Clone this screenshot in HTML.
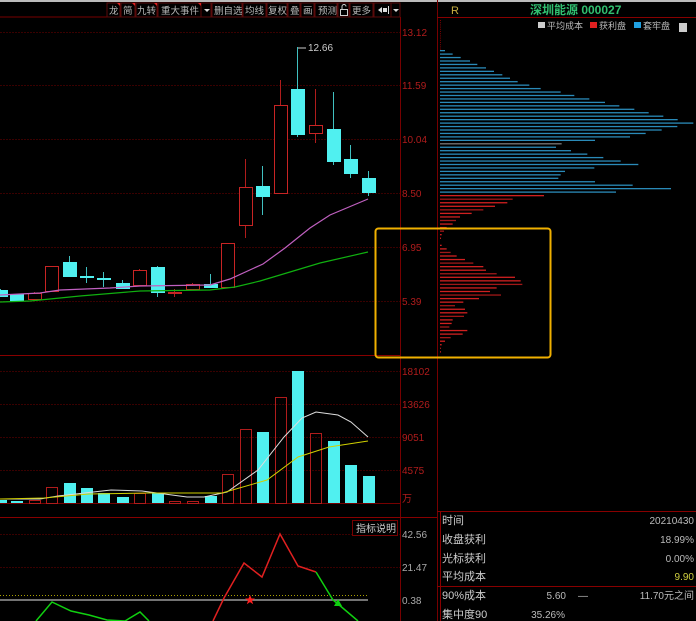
<!DOCTYPE html>
<html><head><meta charset="utf-8">
<style>
html,body{margin:0;padding:0;background:#000;width:696px;height:621px;overflow:hidden}
svg{display:block}
text{font-family:"Liberation Sans","Noto Sans CJK SC",sans-serif}
</style></head><body>
<svg id="s" width="696" height="621" xmlns="http://www.w3.org/2000/svg">
<rect width="696" height="621" fill="#000"/>
<line x1="0" y1="1" x2="696" y2="1" stroke="#bbb" stroke-width="2"/>
<line x1="0" y1="17" x2="400" y2="17" stroke="#700" />
<g fill="none" stroke="#5a0a0a">
<rect x="107" y="3" width="13" height="14"/><rect x="121" y="3" width="14" height="14"/><rect x="136" y="3" width="21" height="14"/><rect x="158" y="3" width="43" height="14"/><rect x="201" y="3" width="10" height="14"/><rect x="212" y="3" width="30" height="14"/><rect x="243" y="3" width="23" height="14"/><rect x="267" y="3" width="20" height="14"/><rect x="288" y="3" width="12" height="14"/><rect x="301" y="3" width="13" height="14"/><rect x="315" y="3" width="22" height="14"/><rect x="338" y="3" width="11" height="14"/><rect x="350" y="3" width="23" height="14"/><rect x="374" y="3" width="17" height="14"/><rect x="391" y="3" width="9" height="14"/>
</g>
<g fill="#b8b8b8" font-size="9.5">
<text x="109" y="14">龙</text><text x="123" y="14">简</text><text x="137" y="14">九转</text><text x="161" y="14">重大事件</text><text x="214" y="14">删自选</text><text x="245" y="14">均线</text><text x="268" y="14">复权</text><text x="290" y="14">叠</text><text x="303" y="14">画</text><text x="318" y="14">预测</text><text x="352" y="14">更多</text>
</g>
<g fill="#ddd"><path d="M204 9h6l-3 3z"/><path d="M393 9h6l-3 3z"/><path d="M378 10l4-3v6zM383 8h4v4h-4zM388 6h1v8h-1z"/></g>
<rect x="340.5" y="9.5" width="7" height="6" fill="none" stroke="#ccc"/><path d="M342 9V6.5a2 2 0 0 1 4 0" fill="none" stroke="#ccc"/>
<g fill="#e02020"><path d="M117 3h3v3z"/><path d="M132 3h3v3z"/><path d="M154 3h3v3z"/><path d="M198 3h3v3z"/></g>
<line x1="400.5" y1="17" x2="400.5" y2="621" stroke="#700"/>
<line x1="437.5" y1="0" x2="437.5" y2="621" stroke="#700"/>
<line x1="0" y1="355.5" x2="400" y2="355.5" stroke="#800"/>
<line x1="0" y1="503.5" x2="400" y2="503.5" stroke="#700"/>
<line x1="0" y1="517.5" x2="437" y2="517.5" stroke="#800"/>
<g stroke="#3a0000" stroke-dasharray="2,1">
<line x1="0" y1="32.5" x2="400" y2="32.5"/><line x1="0" y1="85.5" x2="400" y2="85.5"/><line x1="0" y1="139.5" x2="400" y2="139.5"/><line x1="0" y1="193.5" x2="400" y2="193.5"/><line x1="0" y1="247.5" x2="400" y2="247.5"/><line x1="0" y1="301.5" x2="400" y2="301.5"/>
<line x1="0" y1="371.5" x2="400" y2="371.5"/><line x1="0" y1="404.5" x2="400" y2="404.5"/><line x1="0" y1="437.5" x2="400" y2="437.5"/><line x1="0" y1="470.5" x2="400" y2="470.5"/>
<line x1="0" y1="534.5" x2="400" y2="534.5"/><line x1="0" y1="567.5" x2="400" y2="567.5"/>
</g>
<g fill="#b01c1c" font-size="10">
<text x="402" y="36">13.12</text><text x="402" y="89">11.59</text><text x="402" y="143">10.04</text><text x="402" y="197">8.50</text><text x="402" y="251">6.95</text><text x="402" y="305">5.39</text>
<text x="402" y="375">18102</text><text x="402" y="408">13626</text><text x="402" y="441">9051</text><text x="402" y="474">4575</text><text x="402" y="502">万</text>
</g>
<g fill="#aaa" font-size="10"><text x="402" y="538">42.56</text><text x="402" y="571">21.47</text><text x="402" y="604">0.38</text></g>
<g id="c"></g>
<polyline fill="none" stroke="#c060c0" stroke-width="1.2" points="0,295 40,293 60,290 110,288 140,286 210,285 230,279 263,264 285,248 310,228 330,215 368,199"/>
<polyline fill="none" stroke="#10b010" stroke-width="1.2" points="0,302 30,301 80,296 140,291 210,290 235,287 260,281 290,272 320,263 368,252"/>
<path d="M298 48h8" stroke="#ccc"/><text x="308" y="51" fill="#ccc" font-size="10">12.66</text>
<polyline fill="none" stroke="#ddd" points="0,499 40,499 58,496 111,490 142,491 187,497 204,497 227,492 258,470 284,437 302,418 316,412 338,415 351,422 368,437"/>
<polyline fill="none" stroke="#d0d000" points="0,499 44,498 89,494 147,493 222,493 267,480 298,457 329,447 368,441"/>
<rect x="352.5" y="520.5" width="45" height="15" fill="#000" stroke="#700"/>
<text x="356" y="532" fill="#ccc" font-size="10">指标说明</text>
<line x1="0" y1="595.5" x2="368" y2="595.5" stroke="#aaa000" stroke-dasharray="1,2"/>
<line x1="0" y1="600" x2="368" y2="600" stroke="#999" stroke-width="1.5"/>
<polyline fill="none" stroke="#e02020" stroke-width="1.5" points="213,621 224,598 244,563 262,577 280,534 298,566 316,572"/>
<polyline fill="none" stroke="#10d010" stroke-width="1.5" points="316,572 333,600 338,604 358,621"/>
<polyline fill="none" stroke="#10d010" stroke-width="1.5" points="36,621 52,602 71,611 89,615 107,620 125,621 140,612 149,621"/>
<path d="M250 595l1.5 3.5h3.5l-3 2.2 1.2 3.6-3.2-2.2-3.2 2.2 1.2-3.6-3-2.2h3.5z" fill="#ff2020"/>
<path d="M338 599l4 7h-8z" fill="#10d010"/>
<line x1="437" y1="17.5" x2="696" y2="17.5" stroke="#800"/>
<text x="451" y="14" fill="#c8b040" font-size="11">R</text>
<text x="530" y="14" fill="#30c070" font-size="12" font-weight="bold" font-family="'Liberation Serif','Noto Serif CJK SC',serif">深圳能源 000027</text>
<rect x="538" y="22" width="7" height="6" fill="#ccc"/><text x="547" y="29" fill="#bbb" font-size="9">平均成本</text>
<rect x="590" y="22" width="7" height="6" fill="#e02020"/><text x="599" y="29" fill="#bbb" font-size="9">获利盘</text>
<rect x="634" y="22" width="7" height="6" fill="#20a0e0"/><text x="643" y="29" fill="#bbb" font-size="9">套牢盘</text>
<rect x="679" y="23" width="8" height="9" fill="#ccc"/>
<g id="h"></g>
<line x1="437" y1="511.5" x2="696" y2="511.5" stroke="#800"/>
<line x1="437" y1="586.5" x2="696" y2="586.5" stroke="#800"/>
<line x1="440.5" y1="511" x2="440.5" y2="621" stroke="#800"/>
<g fill="#ccc" font-size="11">
<text x="442" y="524">时间</text><text x="442" y="543">收盘获利</text><text x="442" y="562">光标获利</text><text x="442" y="580">平均成本</text>
<text x="442" y="599">90%成本</text><text x="442" y="618">集中度90</text>
</g>
<g fill="#bbb" font-size="10" text-anchor="end">
<text x="694" y="524">20210430</text><text x="694" y="543">18.99%</text><text x="694" y="562">0.00%</text><text x="694" y="580" fill="#d0d040">9.90</text>
<text x="566" y="599">5.60</text><text x="694" y="599">11.70元之间</text><text x="565" y="618">35.26%</text>
</g>
<text x="578" y="599" fill="#bbb" font-size="10">—</text>
<rect x="375.5" y="228.5" width="175" height="129" rx="3" fill="none" stroke="#f0b000" stroke-width="2"/>
</svg>
<script>
var NS="http://www.w3.org/2000/svg";
function el(p,t,a){var e=document.createElementNS(NS,t);for(var k in a)e.setAttribute(k,a[k]);p.appendChild(e);return e;}
var c=document.getElementById('c');
var C=[[-6,290,296,289,297,0],[10,294,300,294,300,0],[28,293,299,292,300,1],[45,266,291,266,292,1],[63,262,276,256,277,0],[80,276,277,267,283,0],[97,278,279,272,287,0],[116,283,288,280,289,0],[133,270,285,269,286,1],[151,267,292,266,297,0],[168,292,293,289,297,1],[186,284,289,283,290,1],[204,284,287,274,288,0],[221,243,287,243,288,1],[239,187,225,159,238,1],[256,186,196,166,215,0],[274,105,193,80,194,1],[291,89,134,47,137,0],[309,125,133,89,143,1],[327,129,161,92,165,0],[344,159,173,145,178,0],[362,178,192,171,196,0]];
var V=[500,501,500,487,483,488,493,497,493,493,501,501,496,474,429,432,397,371,433,441,465,476];
C.forEach(function(d,i){
 var x=d[0],w=13,col=d[5]?'#c82424':'#50f0f0',mx=x+6.5;
 el(c,'line',{x1:mx,y1:d[3],x2:mx,y2:d[4],stroke:d[5]?'#b01c1c':'#40c0c0'});
 var h=Math.max(d[2]-d[1],1);
 if(d[5]) el(c,'rect',{x:x+.5,y:d[1]+.5,width:w,height:h,fill:'#000',stroke:col});
 else el(c,'rect',{x:x,y:d[1],width:w+1,height:h+1,fill:col});
 var vx=x+1,vw=11;
 if(d[5]) el(c,'rect',{x:vx+.5,y:V[i]+.5,width:vw,height:503-V[i],fill:'none',stroke:'#b01c1c'});
 else el(c,'rect',{x:vx,y:V[i],width:vw+1,height:503-V[i],fill:'#50f0f0'});
});
var h=document.getElementById('h');
var B=[25,48,72,100,122,148,172,197,220,243,278,312,372,413,458,505,548,593,636,680,723,770,722,675,627,580,475,375,358,403,452,500,552,605,473,385,372,365,475,588,703,538];
B.forEach(function(v,i){var y=50+i*3.45;el(h,'rect',{x:440,y:y,width:(v-10)/3,height:1.3,fill:i==27?'#777':'#2a8ab8'});});
var R=[322,228,212,175,140,105,70,58,48,30,22,15,5,0,15,30,42,60,85,110,140,148,180,235,252,257,180,160,193,127,80,55,85,92,82,48,45,38,92,78,42,25,15,10,6];
R.forEach(function(v,i){var y=195+i*3.55;if(v>0)el(h,'rect',{x:440,y:y,width:Math.max((v-10)/3,1),height:1.3,fill:(i%3==1)?'#a01818':'#d02020'});});
for(var i=0;i<14;i++)el(h,'rect',{x:440,y:20+i*2.2,width:1,height:1,fill:'#700'});
</script>
</body></html>
